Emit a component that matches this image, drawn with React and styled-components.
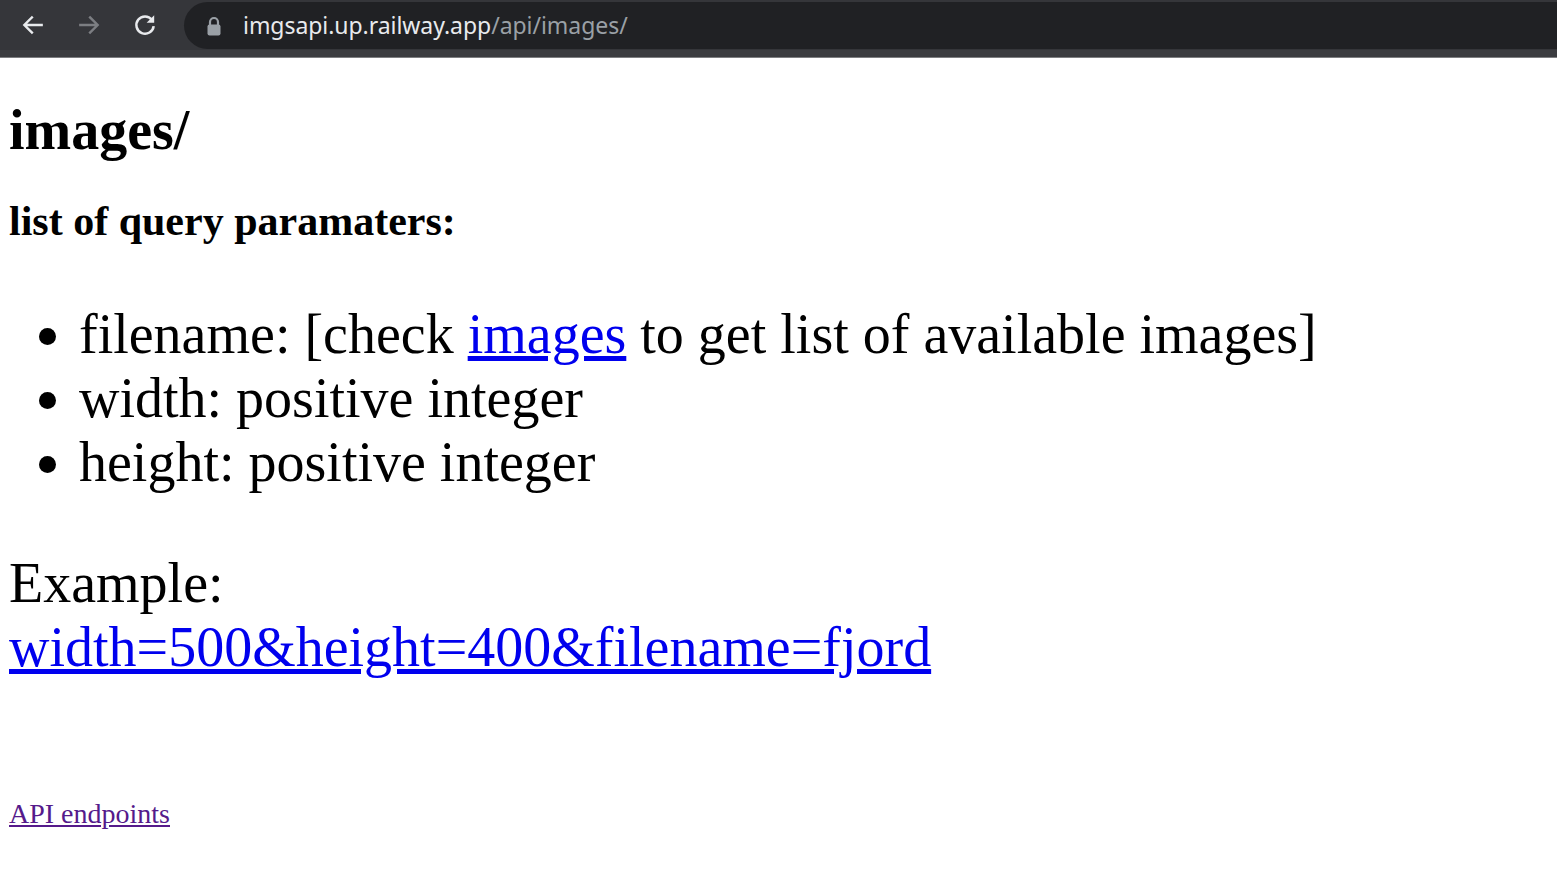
import React from "react";
import styled, { createGlobalStyle } from "styled-components";

const GlobalStyle = createGlobalStyle`
    html, body {
        margin: 0;
        padding: 0;
        background: #ffffff;
    }
`;

const Chrome = styled.div`
    height: 50px;
    background: #35363a;
    display: flex;
    align-items: center;
    border-bottom: 7px solid #3b3c40;
    box-shadow: 0 1px 0 #7d7e81;
    margin-bottom: 1px;
`;

const NavButton = styled.div`
    width: 56px;
    height: 50px;
    display: flex;
    align-items: center;
    justify-content: center;
    color: ${(p) => (p.disabled ? "#7c7e82" : "#e8eaed")};
    margin-left: ${(p) => p.first ? "5px" : "0"};
`;

const Omnibox = styled.div`
    flex: 1;
    height: 47px;
    margin-left: 11px;
    align-self: flex-end;
    margin-bottom: 1px;
    background: #202124;
    border-radius: 24px 0 0 24px;
    display: flex;
    align-items: center;
    padding-left: 22px;
`;

const Url = styled.span`
    font-family: "Noto Sans", "Open Sans", sans-serif;
    font-size: 23px;
    letter-spacing: -0.05px;
    color: #e8eaed;
    margin-left: 21px;
    margin-top: -2px;
`;

const UrlPath = styled.span`
    color: #9aa0a6;
`;

const Page = styled.div`
    padding: 0 9px;
    font-family: "Liberation Serif", "Times New Roman", serif;
    color: #000;
    display: flow-root;
`;

const Title = styled.h1`
    font-size: 56px;
    font-weight: bold;
    margin: 40px 0 35px 0;
    line-height: 1.15;
`;

const Subtitle = styled.h2`
    font-size: 42px;
    font-weight: bold;
    margin: 0;
    line-height: 1.15;
`;

const ParamList = styled.ul`
    font-size: 56px;
    line-height: 1.15;
    margin: 56px 0;
    padding-left: 70px;
`;

const Example = styled.p`
    font-size: 56px;
    line-height: 1.15;
    margin: 56px 0;
`;

const Link = styled.a`
    color: ${(p) => (p.visited ? "#551a8b" : "#0000ee")};
    text-decoration: underline;
    cursor: pointer;
`;

const Footer = styled.div`
    font-size: 28px;
    line-height: 1.15;
    padding-top: 62px;
`;

const BackIcon = () => (
    <svg width="26" height="26" viewBox="0 0 24 24" fill="none" stroke="currentColor" strokeWidth="2.2" strokeLinecap="square">
        <path d="M20 12H5M11 5l-7 7 7 7" />
    </svg>
);

const ForwardIcon = () => (
    <svg width="26" height="26" viewBox="0 0 24 24" fill="none" stroke="currentColor" strokeWidth="2.2" strokeLinecap="square">
        <path d="M4 12h15M13 5l7 7-7 7" />
    </svg>
);

const ReloadIcon = () => (
    <svg width="26" height="26" viewBox="0 0 24 24" fill="none">
        <path d="M18.4 7.2A8 8 0 1 0 20 13" stroke="currentColor" strokeWidth="2.3" />
        <path d="M20.5 3v7h-7z" fill="currentColor" />
    </svg>
);

const LockIcon = () => (
    <svg width="16" height="20" viewBox="0 0 16 20">
        <path d="M4 9V6a4 4 0 0 1 8 0v3" fill="none" stroke="#9aa0a6" strokeWidth="2.2" />
        <rect x="1.5" y="8.5" width="13" height="11" rx="2" fill="#9aa0a6" />
    </svg>
);

const App = () => {
    return (
        <>
            <GlobalStyle />
            <Chrome>
                <NavButton first><BackIcon /></NavButton>
                <NavButton disabled><ForwardIcon /></NavButton>
                <NavButton><ReloadIcon /></NavButton>
                <Omnibox>
                    <LockIcon />
                    <Url>
                        imgsapi.up.railway.app<UrlPath>/api/images/</UrlPath>
                    </Url>
                </Omnibox>
            </Chrome>
            <Page>
                <Title>images/</Title>
                <Subtitle>list of query paramaters:</Subtitle>
                <ParamList>
                    <li>filename: [check <Link>images</Link> to get list of available images]</li>
                    <li>width: positive integer</li>
                    <li>height: positive integer</li>
                </ParamList>
                <Example>
                    Example:
                    <br />
                    <Link>width=500&amp;height=400&amp;filename=fjord</Link>
                </Example>
                <Footer>
                    <Link visited>API endpoints</Link>
                </Footer>
            </Page>
        </>
    );
};

export default App;
